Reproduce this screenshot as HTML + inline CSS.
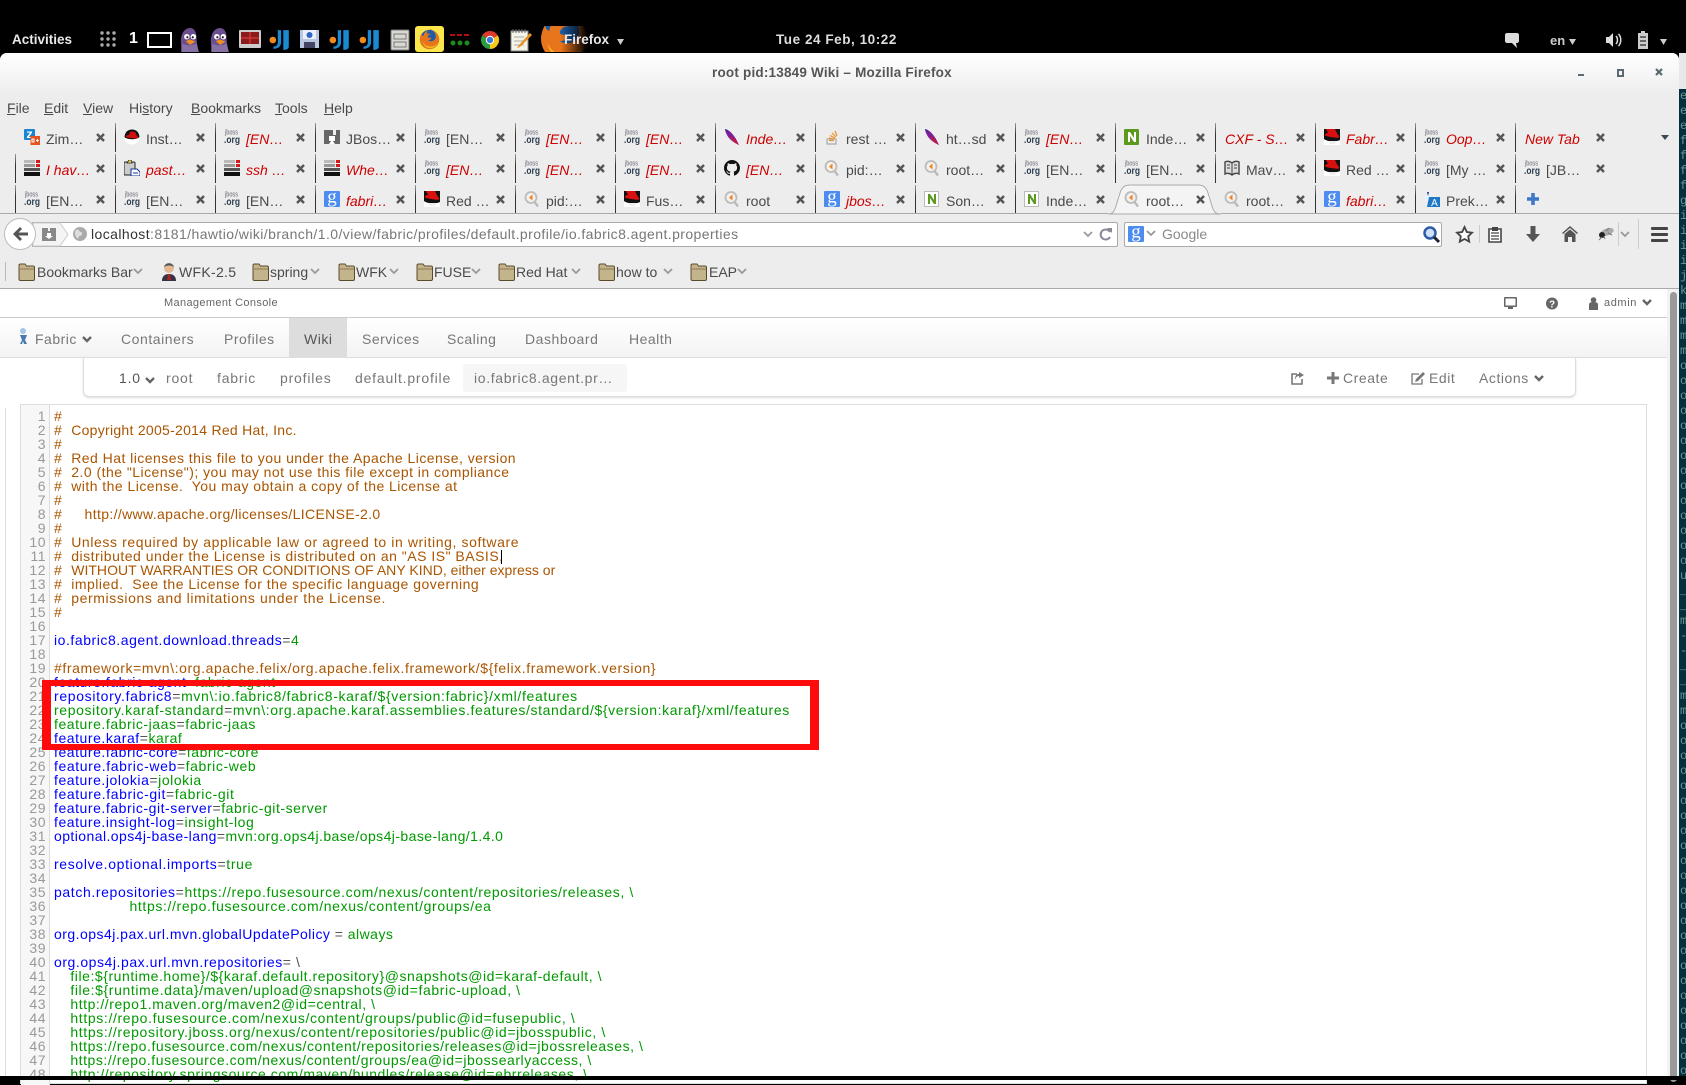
<!DOCTYPE html>
<html><head><meta charset="utf-8"><title>root pid:13849 Wiki – Mozilla Firefox</title>
<style>
html,body{margin:0;padding:0;background:#000}
body{position:relative;width:1686px;height:1080px;overflow:hidden;font-family:"Liberation Sans",sans-serif;font-size:14px;color:#4a4a4a}
.a{position:absolute;white-space:nowrap;line-height:16px}
svg{position:absolute;overflow:visible}
.s16{width:16px;height:16px}
#win{position:absolute;left:0;top:53px;width:1679px;height:1027px;border-radius:7px 7px 0 0;overflow:hidden;background:#ededed}
.t{position:absolute;width:100px;height:29px;line-height:30px;white-space:nowrap}
.t:before{content:"";position:absolute;left:-1px;top:0;width:1px;height:100%;background:linear-gradient(#999,#333 40%,#333)}
.t.n:before{display:none}
.t>svg.ic{left:8px;top:6px;width:16px;height:16px}
.t>svg.c{left:80px;top:10px;width:9px;height:9px}
.t>span{position:absolute;left:30px;top:1px}
.t>span.r,.r{color:#c00;font-style:italic}
.b{position:absolute;white-space:nowrap;line-height:16px;top:264px}
.nv{position:absolute;top:331px;line-height:16px;color:#777;letter-spacing:.5px;white-space:nowrap}
.bc{position:absolute;top:370px;line-height:16px;color:#777;letter-spacing:.8px;white-space:nowrap}
.bd{position:absolute;top:370px;line-height:16px;color:#777;letter-spacing:.55px;white-space:nowrap}
pre{margin:0;font-family:"Liberation Sans",sans-serif;font-size:14px;line-height:14px;letter-spacing:.55px}
.cm{color:#a50}.k{color:#00f}.v{color:#090}.o{color:#555}
.sp{letter-spacing:.2px}
</style></head><body>
<svg width="0" height="0" style="position:absolute">
<defs>
<symbol id="x" viewBox="0 0 9 9"><path d="M1 1l7 7M8 1L1 8" stroke="#555" stroke-width="2.4"/></symbol>
<symbol id="z" viewBox="0 0 16 16"><rect width="11" height="11" fill="#1a86cf" rx="1"/><path d="M3 2.500h5v1.200L4.800 8H8v1H3V7.800L6 3.600H3z" fill="#fff"/><rect x="6.500" y="7" width="9.500" height="9" fill="#e8521c"/><path d="M8 10h2v3H8zM12 11.500h3M13.500 10v3" stroke="#fff" stroke-width="1" fill="none"/></symbol>
<symbol id="rh" viewBox="0 0 16 16"><circle cx="8" cy="8" r="7.500" fill="#fff"/><path d="M.5 8C1 3 4 .5 8 .5s7 2.500 7.500 7.500C13 11 3 11 .5 8z" fill="#111"/><path d="M2 8c0-2 2-2 3-2l1-3c1-1 3 0 5 0 1 1 1 3 3 5 1 1-1 2-3 1.500C8 9 4 9 2 8z" fill="#d01010"/></symbol>
<symbol id="rs" viewBox="0 0 16 16"><rect width="16" height="16" fill="#fff"/><path d="M0 0h16v11c-4 2-12 2-16-1z" fill="#111"/><path d="M2 0h9c1 2 2 5 4 7 1 2-2 2-4 1.500C8 8 4 8 1 6.500 1 5 2 4 4 4z" fill="#d81010"/><path d="M5 12h7l-1 3H6z" fill="#eee"/></symbol>
<symbol id="j" viewBox="0 0 16 16"><text x="1" y="5.500" font-size="7" fill="#667" font-family="Liberation Sans" textLength="13" lengthAdjust="spacingAndGlyphs">jboss</text><text x="0" y="14" font-size="10.500" font-weight="bold" fill="#2c3e50" font-family="Liberation Sans" textLength="16" lengthAdjust="spacingAndGlyphs">.org</text></symbol>
<symbol id="bm" viewBox="0 0 16 16"><rect y="1" width="16" height="14" fill="#666"/><rect x="9" y="0" width="3" height="6" fill="#eee"/><path d="M5 15l3-4 3 4z" fill="#fff"/><rect x="5" y="7" width="6" height="5" fill="#fff"/></symbol>
<symbol id="f" viewBox="0 0 16 16"><path d="M1 0c5 1 10 7 13 14l1 2C10 14 5 10 3 6 2 4 1 2 1 0z" fill="#7a1e9c"/><path d="M6 7c3 1 6 4 9 9-4-2-7-4-9-9z" fill="#c8183c"/><path d="M1 0c1 0 3 1 4 3-1 0-3-1-4-3z" fill="#3a2a8c"/></symbol>
<symbol id="so" viewBox="0 0 16 16"><path d="M3 10h9v5H3z" fill="none" stroke="#aaa" stroke-width="1.200"/><path d="M5 11.500h5M5 9l5 1M6 6.500l5 2.500M8 4l4 4M11 2l2 5" stroke="#e8912c" stroke-width="1.200" fill="none"/></symbol>
<symbol id="n" viewBox="0 0 16 16"><rect width="15" height="16" fill="#5c9a1e" rx="1"/><path d="M4 13V3h2l4 6V3h2v10h-2L6 7v6z" fill="#fff"/></symbol>
<symbol id="nl" viewBox="0 0 16 16"><rect x=".5" y=".5" width="14" height="15" fill="#fff" stroke="#bbb"/><path d="M4 13V3h2l4 6V3h2v10h-2L6 7v6z" fill="#5c9a1e"/></symbol>
<symbol id="gh" viewBox="0 0 16 16"><path fill="#111" d="M8 0C3.580 0 0 3.580 0 8c0 3.540 2.290 6.530 5.470 7.590.4.070.55-.170.55-.380 0-.190-.010-.820-.010-1.490-2.010.370-2.530-.490-2.690-.940-.090-.230-.480-.940-.820-1.130-.280-.150-.680-.520-.010-.530.630-.010 1.080.580 1.230.820.720 1.210 1.870.870 2.330.660.070-.520.280-.870.510-1.070-1.780-.200-3.640-.890-3.640-3.950 0-.870.310-1.590.820-2.150-.080-.200-.360-1.020.080-2.120 0 0 .670-.210 2.200.820.640-.180 1.320-.270 2-.270.680 0 1.360.090 2 .27 1.530-1.040 2.200-.820 2.200-.820.440 1.100.160 1.920.080 2.120.510.560.820 1.270.820 2.150 0 3.070-1.870 3.750-3.650 3.950.290.250.540.730.540 1.480 0 1.070-.010 1.930-.010 2.200 0 .210.150.460.550.380A8.013 8.013 0 0016 8c0-4.420-3.580-8-8-8z"/></symbol>
<symbol id="h" viewBox="0 0 16 16"><circle cx="7" cy="6.500" r="5.500" fill="#f4f0ea" stroke="#bbb" stroke-width="1.800"/><path d="M10.500 11l3.500 4.500" stroke="#bbb" stroke-width="2.400"/><path d="M8.500 3.500v6L5 6.500z" fill="#e8842c"/></symbol>
<symbol id="bars" viewBox="0 0 16 16"><path d="M0 0h11v3H0z" fill="#bbb"/><path d="M12 0h4v3h-4zM12 4h4v3h-4z" fill="#d01c1c"/><path d="M0 4h11v3H0z" fill="#999"/><path d="M0 8h16v3H0z" fill="#555"/><path d="M0 12h16v4H0z" fill="#111"/></symbol>
<symbol id="ps" viewBox="0 0 16 16"><rect x="0" y="2" width="11" height="13" fill="#ccc" stroke="#222" rx="1"/><path d="M3 3l2-3 2 0 1 3z" fill="#f4e44c" stroke="#222" stroke-width=".8"/><path d="M7 9h6l3 3v4H7z" fill="#fff" stroke="#113399"/><path d="M9 13h5" stroke="#113399"/></symbol>
<symbol id="bk" viewBox="0 0 16 16"><path d="M1 2c2-1 5-1 7 1 2-2 5-2 7-1v12c-2-1-5-1-7 1-2-2-5-2-7-1z" fill="#ddd" stroke="#444" stroke-width="1.400"/><path d="M8 3v12M3 5h3M3 8h3M10 5h3M10 8h3" stroke="#444"/></symbol>
<symbol id="g" viewBox="0 0 16 16"><rect width="16" height="16" fill="#4c8cf0" rx="1"/><text x="8" y="11.500" font-size="19" fill="#fff" text-anchor="middle" font-family="Liberation Serif">g</text></symbol>
<symbol id="tr" viewBox="0 0 16 16"><path d="M1 0l6 0 1 9-7 1z" fill="#e8f0ff"/><path d="M3 1l2 0-1 4z" fill="#335"/><path d="M5 6h11v10H3z" fill="#1c78c8"/><text x="10.500" y="15" font-size="10" fill="#fff" text-anchor="middle" font-family="Liberation Sans">A</text></symbol>
<symbol id="fd" viewBox="0 0 17 18"><path d="M1 4V2.500C1 1.500 1.500 1 2.500 1H7l1.500 2H15c1 0 1.500.5 1.500 1.500V16c0 1-.5 1.500-1.500 1.500H2.500c-1 0-1.500-.5-1.500-1.500z" fill="#c4b48c" stroke="#5b4a2a"/><path d="M2 6h14" stroke="#8d7b50"/></symbol>
<symbol id="cv" viewBox="0 0 10 7"><path d="M1 1l4 4 4-4" fill="none" stroke="#999" stroke-width="1.800"/></symbol>
<symbol id="cd" viewBox="0 0 10 7"><path d="M1 1l4 4 4-4" fill="none" stroke="#666" stroke-width="2.400"/></symbol>
<symbol id="pd" viewBox="0 0 20 22"><path d="M3 22c0-6-1-10 0-14C4 3 7 0 11 0c4 0 6 4 6 9 0 5 1 9 2 13z" fill="#6b4e8e"/><path d="M3 22c0-4 1-6 1-8 2 2 8 3 13 0l2 8z" fill="#8770a4"/><circle cx="8" cy="8" r="2.500" fill="#fff"/><circle cx="14" cy="8" r="2.500" fill="#fff"/><circle cx="8.500" cy="8.500" r="1" fill="#222"/><circle cx="13.500" cy="8.500" r="1" fill="#222"/><path d="M7 12l4-1.500 5 2-5 3z" fill="#f09020"/></symbol>
<symbol id="jj" viewBox="0 0 20 20"><circle cx="3.500" cy="10" r="3" fill="#f08a1c"/><path d="M8 1h3v11c0 4-3 6-7 6v-2c3 0 4-2 4-4zM13 1h5v15c0 2-2 3-5 3z" fill="#1c8ad0"/></symbol>
<symbol id="fx" viewBox="0 0 24 24"><circle cx="12" cy="12" r="11" fill="#1c5da8"/><path d="M12 1C18 1 23 6 23 12s-5 11-11 11C6 23 1 18 1 12c0-3 1-5 2-7 0 2 1 3 2 3 0-2 2-5 5-6-1 2-1 3 0 4 1-1 2-1 4 0-3 0-4 2-4 3s2 1 4 1c0 2-2 3-4 3 3 2 8 1 9-3 1-4-2-8-6-10z" fill="#e8741c"/><path d="M4 14c1 5 5 8 9 8s7-3 8-6c-2 3-5 4-8 4-4 0-7-2-9-6z" fill="#f8b81c"/></symbol>
</defs>
</svg>

<!-- GNOME top bar -->
<div class="a" style="left:12px;top:32px;color:#e8e8e8;font-weight:bold;font-size:13.500px">Activities</div>
<svg style="left:100px;top:31px" width="16" height="16"><g fill="#aaa"><circle cx="2" cy="2" r="1.700"/><circle cx="8" cy="2" r="1.700"/><circle cx="14" cy="2" r="1.700"/><circle cx="2" cy="8" r="1.700"/><circle cx="8" cy="8" r="1.700"/><circle cx="14" cy="8" r="1.700"/><circle cx="2" cy="14" r="1.700"/><circle cx="8" cy="14" r="1.700"/><circle cx="14" cy="14" r="1.700"/></g></svg>
<div class="a" style="left:129px;top:31px;color:#fff;font-weight:bold;font-size:16px">1</div>
<div style="position:absolute;left:147px;top:32px;width:21px;height:12px;border:2px solid #fff;border-top-width:2px"></div>
<svg style="left:178px;top:28px" width="22" height="24"><use href="#pd"/></svg>
<svg style="left:208px;top:28px" width="22" height="24"><use href="#pd"/></svg>
<svg style="left:239px;top:30px" width="22" height="18"><rect width="22" height="18" fill="#ccc" rx="1"/><rect x="2" y="2" width="18" height="12" fill="#8c1c1c"/><path d="M11 2v12M2 8h18" stroke="#e84040"/></svg>
<svg style="left:269px;top:29px" width="22" height="22"><use href="#jj"/></svg>
<svg style="left:300px;top:30px" width="19" height="18"><rect width="19" height="18" fill="#b8c8e0"/><rect x="3" y="0" width="13" height="9" fill="#eef"/><circle cx="9.500" cy="5" r="3" fill="#2c68c0"/><rect x="4" y="12" width="11" height="6" fill="#446"/></svg>
<svg style="left:329px;top:29px" width="22" height="22"><use href="#jj"/></svg>
<svg style="left:359px;top:29px" width="22" height="22"><use href="#jj"/></svg>
<svg style="left:391px;top:30px" width="18" height="20"><rect width="18" height="20" fill="#d8d8d0" stroke="#777" rx="1"/><rect x="3" y="4" width="12" height="5" fill="none" stroke="#777"/><rect x="3" y="12" width="12" height="5" fill="none" stroke="#777"/></svg>
<div style="position:absolute;left:415px;top:26px;width:29px;height:26px;background:#fbe64c;border-radius:3px"></div>
<svg style="left:419px;top:29px" width="21" height="21"><use href="#fx"/></svg>
<svg style="left:450px;top:34px" width="20" height="13"><path d="M0 0h5v2H0zM7 0h5v2H7zM14 0h5v2h-5z" fill="#b01010"/><g fill="#1c8a1c"><circle cx="3" cy="9" r="2.500"/><circle cx="10" cy="9" r="2.500"/><circle cx="17" cy="9" r="2.500"/></g></svg>
<svg style="left:481px;top:31px" width="18" height="18" viewBox="0 0 18 18"><path d="M9 9L1.200 4.500A9 9 0 0116.800 4.500z" fill="#db3a2c"/><path d="M9 9l7.800-4.500A9 9 0 019 18z" fill="#f6c81c"/><path d="M9 9v9A9 9 0 011.200 4.500z" fill="#2c9c44"/><circle cx="9" cy="9" r="4.200" fill="#fff"/><circle cx="9" cy="9" r="3.200" fill="#3c78d8"/></svg>
<svg style="left:510px;top:28px" width="22" height="23"><rect x="1" y="3" width="17" height="20" fill="#f4f4e8" stroke="#888"/><path d="M3 1v4M6 1v4M9 1v4M12 1v4M15 1v4" stroke="#666"/><path d="M4 9h10M4 13h10M4 17h10" stroke="#aaa"/><path d="M20 5L9 17l-2 3 3-1L22 7z" fill="#e89020"/></svg>
<div style="position:absolute;left:541px;top:26px;width:50px;height:26px;overflow:hidden"><svg style="left:-2px;top:-12px" width="50" height="50"><use href="#fx"/></svg><div style="position:absolute;left:0;top:0;width:50px;height:26px;background:linear-gradient(90deg,rgba(0,0,0,0) 40%,#000 92%)"></div></div>
<div class="a" style="left:564px;top:32px;color:#e8e8e8;font-weight:bold;font-size:13.500px">Firefox</div>
<svg style="left:617px;top:39px" width="7" height="6"><path d="M0 0h7L3.500 6z" fill="#ccc"/></svg>
<div class="a" style="left:776px;top:32px;color:#ddd;font-weight:bold;font-size:13.500px;letter-spacing:.55px">Tue 24 Feb, 10:22</div>
<svg style="left:1505px;top:33px" width="14" height="15"><path d="M2 0h10c1 0 2 1 2 2v6c0 1-1 2-2 2h-1l1 5-5-5H2C1 10 0 9 0 8V2C0 1 1 0 2 0z" fill="#ddd"/></svg>
<div class="a" style="left:1550px;top:33px;color:#ccc;font-weight:bold;font-size:13px">en</div>
<svg style="left:1569px;top:39px" width="7" height="6"><path d="M0 0h7L3.500 6z" fill="#ccc"/></svg>
<svg style="left:1606px;top:32px" width="16" height="16"><path d="M0 5h3l4-4v14l-4-4H0z" fill="#ddd"/><path d="M10 4c2 2 2 6 0 8M12.500 2c3 3 3 9 0 12" stroke="#ddd" stroke-width="1.500" fill="none"/></svg>
<svg style="left:1637px;top:31px" width="12" height="18"><path d="M4 0h4v2h3v16H1V2h3z" fill="#ccc"/><path d="M3 6h6M3 10h6M3 14h6" stroke="#000"/></svg>
<svg style="left:1660px;top:39px" width="7" height="6"><path d="M0 0h7L3.500 6z" fill="#ccc"/></svg>

<!-- terminal strip at right edge -->
<div style="position:absolute;left:1679px;top:53px;width:7px;height:1027px;background:#03303c;overflow:hidden">
<div style="position:absolute;left:0;top:0;width:7px;height:36px;background:#e8e8e8"></div>
<pre style="position:absolute;left:1px;top:36px;font-family:'Liberation Mono',monospace;font-size:12px;line-height:15px;letter-spacing:0;color:#6d929a">e
e
e
f
f
f
f
g
i
i
i
i
j
k
m
m
m
m
o
o
o
o
o
o
o
o
o
o
o
o
o
o
u
_
_
m
-
-
_
_
m
m
o
o
o
o
o
o
o
o
o
o
o
o
o
o
o
o
o
o
o
o
o
o
o
o</pre></div>

<!-- Firefox window -->
<div id="win">
<div style="position:absolute;left:0;top:0;width:1679px;height:42px;background:linear-gradient(#fff,#ededed)"></div>
</div>
<div class="a" style="left:712px;top:65px;color:#555;font-weight:bold;font-size:13.500px;letter-spacing:.2px">root pid:13849 Wiki – Mozilla Firefox</div>
<div style="position:absolute;left:1578px;top:74px;width:6px;height:2px;background:#5a6a70"></div>
<div style="position:absolute;left:1617px;top:69px;width:3px;height:4px;border:2px solid #5a6a70"></div>
<svg style="left:1655px;top:68px" width="8" height="8"><path d="M1 1l6 6M7 1L1 7" stroke="#5a6a70" stroke-width="2.200"/></svg>

<!-- Menu -->
<div class="a" style="left:7px;top:100px"><u>F</u>ile</div>
<div class="a" style="left:44px;top:100px"><u>E</u>dit</div>
<div class="a" style="left:83px;top:100px"><u>V</u>iew</div>
<div class="a" style="left:129px;top:100px">Hi<u>s</u>tory</div>
<div class="a" style="left:191px;top:100px"><u>B</u>ookmarks</div>
<div class="a" style="left:275px;top:100px"><u>T</u>ools</div>
<div class="a" style="left:324px;top:100px"><u>H</u>elp</div>

<!-- Tabs row 1 -->
<div class="t n" style="left:16px;top:123px"><svg class="ic"><use href="#z"/></svg><span>Zim…</span><svg class="c"><use href="#x"/></svg></div>
<div class="t" style="left:116px;top:123px"><svg class="ic"><use href="#rh"/></svg><span>Inst…</span><svg class="c"><use href="#x"/></svg></div>
<div class="t" style="left:216px;top:123px"><svg class="ic"><use href="#j"/></svg><span class="r">[EN…</span><svg class="c"><use href="#x"/></svg></div>
<div class="t" style="left:316px;top:123px"><svg class="ic"><use href="#bm"/></svg><span>JBos…</span><svg class="c"><use href="#x"/></svg></div>
<div class="t" style="left:416px;top:123px"><svg class="ic"><use href="#j"/></svg><span>[EN…</span><svg class="c"><use href="#x"/></svg></div>
<div class="t" style="left:516px;top:123px"><svg class="ic"><use href="#j"/></svg><span class="r">[EN…</span><svg class="c"><use href="#x"/></svg></div>
<div class="t" style="left:616px;top:123px"><svg class="ic"><use href="#j"/></svg><span class="r">[EN…</span><svg class="c"><use href="#x"/></svg></div>
<div class="t" style="left:716px;top:123px"><svg class="ic"><use href="#f"/></svg><span class="r">Inde…</span><svg class="c"><use href="#x"/></svg></div>
<div class="t" style="left:816px;top:123px"><svg class="ic"><use href="#so"/></svg><span>rest …</span><svg class="c"><use href="#x"/></svg></div>
<div class="t" style="left:916px;top:123px"><svg class="ic"><use href="#f"/></svg><span>ht…sd</span><svg class="c"><use href="#x"/></svg></div>
<div class="t" style="left:1016px;top:123px"><svg class="ic"><use href="#j"/></svg><span class="r">[EN…</span><svg class="c"><use href="#x"/></svg></div>
<div class="t" style="left:1116px;top:123px"><svg class="ic"><use href="#n"/></svg><span>Inde…</span><svg class="c"><use href="#x"/></svg></div>
<div class="t" style="left:1216px;top:123px"><span class="r" style="left:9px">CXF - S…</span><svg class="c"><use href="#x"/></svg></div>
<div class="t" style="left:1316px;top:123px"><svg class="ic"><use href="#rs"/></svg><span class="r">Fabr…</span><svg class="c"><use href="#x"/></svg></div>
<div class="t" style="left:1416px;top:123px"><svg class="ic"><use href="#j"/></svg><span class="r">Oop…</span><svg class="c"><use href="#x"/></svg></div>
<div class="t" style="left:1516px;top:123px"><span class="r" style="left:9px">New Tab</span><svg class="c"><use href="#x"/></svg></div>
<svg style="left:1661px;top:135px" width="8" height="5"><path d="M0 0h8L4 5z" fill="#3a4a55"/></svg>

<!-- Tabs row 2 -->
<div class="t" style="left:16px;top:154px"><svg class="ic"><use href="#bars"/></svg><span class="r">I hav…</span><svg class="c"><use href="#x"/></svg></div>
<div class="t" style="left:116px;top:154px"><svg class="ic"><use href="#ps"/></svg><span class="r">past…</span><svg class="c"><use href="#x"/></svg></div>
<div class="t" style="left:216px;top:154px"><svg class="ic"><use href="#bars"/></svg><span class="r">ssh …</span><svg class="c"><use href="#x"/></svg></div>
<div class="t" style="left:316px;top:154px"><svg class="ic"><use href="#bars"/></svg><span class="r">Whe…</span><svg class="c"><use href="#x"/></svg></div>
<div class="t" style="left:416px;top:154px"><svg class="ic"><use href="#j"/></svg><span class="r">[EN…</span><svg class="c"><use href="#x"/></svg></div>
<div class="t" style="left:516px;top:154px"><svg class="ic"><use href="#j"/></svg><span class="r">[EN…</span><svg class="c"><use href="#x"/></svg></div>
<div class="t" style="left:616px;top:154px"><svg class="ic"><use href="#j"/></svg><span class="r">[EN…</span><svg class="c"><use href="#x"/></svg></div>
<div class="t" style="left:716px;top:154px"><svg class="ic"><use href="#gh"/></svg><span class="r">[EN…</span><svg class="c"><use href="#x"/></svg></div>
<div class="t" style="left:816px;top:154px"><svg class="ic"><use href="#h"/></svg><span>pid:…</span><svg class="c"><use href="#x"/></svg></div>
<div class="t" style="left:916px;top:154px"><svg class="ic"><use href="#h"/></svg><span>root…</span><svg class="c"><use href="#x"/></svg></div>
<div class="t" style="left:1016px;top:154px"><svg class="ic"><use href="#j"/></svg><span>[EN…</span><svg class="c"><use href="#x"/></svg></div>
<div class="t" style="left:1116px;top:154px"><svg class="ic"><use href="#j"/></svg><span>[EN…</span><svg class="c"><use href="#x"/></svg></div>
<div class="t" style="left:1216px;top:154px"><svg class="ic"><use href="#bk"/></svg><span>Mav…</span><svg class="c"><use href="#x"/></svg></div>
<div class="t" style="left:1316px;top:154px"><svg class="ic"><use href="#rs"/></svg><span>Red …</span><svg class="c"><use href="#x"/></svg></div>
<div class="t" style="left:1416px;top:154px"><svg class="ic"><use href="#j"/></svg><span>[My …</span><svg class="c"><use href="#x"/></svg></div>
<div class="t" style="left:1516px;top:154px"><svg class="ic"><use href="#j"/></svg><span>[JB…</span><svg class="c"><use href="#x"/></svg></div>

<!-- Tabs row 3 -->
<div class="t" style="left:16px;top:185px"><svg class="ic"><use href="#j"/></svg><span>[EN…</span><svg class="c"><use href="#x"/></svg></div>
<div class="t" style="left:116px;top:185px"><svg class="ic"><use href="#j"/></svg><span>[EN…</span><svg class="c"><use href="#x"/></svg></div>
<div class="t" style="left:216px;top:185px"><svg class="ic"><use href="#j"/></svg><span>[EN…</span><svg class="c"><use href="#x"/></svg></div>
<div class="t" style="left:316px;top:185px"><svg class="ic"><use href="#g"/></svg><span class="r">fabri…</span><svg class="c"><use href="#x"/></svg></div>
<div class="t" style="left:416px;top:185px"><svg class="ic"><use href="#rs"/></svg><span>Red …</span><svg class="c"><use href="#x"/></svg></div>
<div class="t" style="left:516px;top:185px"><svg class="ic"><use href="#h"/></svg><span>pid:…</span><svg class="c"><use href="#x"/></svg></div>
<div class="t" style="left:616px;top:185px"><svg class="ic"><use href="#rs"/></svg><span>Fus…</span><svg class="c"><use href="#x"/></svg></div>
<div class="t" style="left:716px;top:185px"><svg class="ic"><use href="#h"/></svg><span>root</span><svg class="c"><use href="#x"/></svg></div>
<div class="t" style="left:816px;top:185px"><svg class="ic"><use href="#g"/></svg><span class="r">jbos…</span><svg class="c"><use href="#x"/></svg></div>
<div class="t" style="left:916px;top:185px"><svg class="ic"><use href="#nl"/></svg><span>Son…</span><svg class="c"><use href="#x"/></svg></div>
<div class="t" style="left:1016px;top:185px"><svg class="ic"><use href="#nl"/></svg><span>Inde…</span><svg class="c"><use href="#x"/></svg></div>
<svg style="left:1108px;top:185px" width="118" height="30"><path d="M0 29c5 0 6-2 8-8l4-13C14 2 17 0 22 0h68c5 0 8 2 10 8l4 13c2 6 3 8 9 8z" fill="#f4f4f4" stroke="#aaa"/></svg>
<div class="t n" style="left:1116px;top:185px"><svg class="ic"><use href="#h"/></svg><span>root…</span><svg class="c"><use href="#x"/></svg></div>
<div class="t n" style="left:1216px;top:185px"><svg class="ic"><use href="#h"/></svg><span>root…</span><svg class="c"><use href="#x"/></svg></div>
<div class="t" style="left:1316px;top:185px"><svg class="ic"><use href="#g"/></svg><span class="r">fabri…</span><svg class="c"><use href="#x"/></svg></div>
<div class="t" style="left:1416px;top:185px"><svg class="ic"><use href="#tr"/></svg><span>Prek…</span><svg class="c"><use href="#x"/></svg></div>
<div class="t" style="left:1516px;top:185px"><svg style="left:10px;top:7px" width="14" height="14"><path d="M7 1v12M1 7h12" stroke="#3c78c8" stroke-width="3.500"/></svg></div>
<div style="position:absolute;left:0;top:213px;width:1108px;height:1px;background:#aaa"></div>
<div style="position:absolute;left:1221px;top:213px;width:458px;height:1px;background:#aaa"></div>

<!-- Nav bar -->
<div style="position:absolute;left:32px;top:222px;width:1084px;height:23px;background:#fff;border:1px solid #aaa;border-radius:0 2px 2px 0"></div>
<svg style="left:33px;top:223px" width="36" height="23"><path d="M0 0h27l8 11.500L27 23H0z" fill="#f4f4f4" stroke="#ccc"/></svg>
<div style="position:absolute;left:4px;top:218px;width:30px;height:30px;border-radius:50%;background:#fff;border:1px solid #bbb"></div>
<svg style="left:12px;top:226px" width="17" height="16"><path d="M8 1L1 8l7 7 2-2-3.500-3.500H16v-3H6.500L10 3z" fill="#555"/></svg>
<svg style="left:42px;top:227px" width="14" height="14"><path d="M0 1h6v3h2V1h6v13H0z" fill="#888"/><path d="M5 6h4v3h2l-4 3-4-3h2z" fill="#fff"/></svg>
<svg style="left:73px;top:227px" width="14" height="14"><circle cx="7" cy="7" r="7" fill="#aaa"/><path d="M3 3c3-2 3 2 5 2s1 4-1 4-1 4-3 2-3-6-1-8z" fill="#ddd"/></svg>
<div class="a" style="left:91px;top:226px;color:#777;letter-spacing:.42px"><span style="color:#333">localhost</span>:8181/hawtio/wiki/branch/1.0/view/fabric/profiles/default.profile/io.fabric8.agent.properties</div>
<svg style="left:1083px;top:231px" width="10" height="7"><use href="#cv"/></svg>
<svg style="left:1099px;top:227px" width="13" height="14"><path d="M11 5a5 5 0 100 5" fill="none" stroke="#889" stroke-width="2"/><path d="M8 1h5v5z" fill="#889"/></svg>
<div style="position:absolute;left:1124px;top:222px;width:316px;height:23px;background:#fff;border:1px solid #aaa;border-radius:2px"></div>
<svg class="s16" style="left:1128px;top:226px"><use href="#g"/></svg>
<svg style="left:1146px;top:230px" width="10" height="7"><use href="#cv"/></svg>
<div class="a" style="left:1162px;top:226px;color:#888">Google</div>
<svg style="left:1423px;top:226px" width="17" height="17"><circle cx="7" cy="7" r="5.500" fill="#cfe0f8" stroke="#2c5ca8" stroke-width="2.500"/><path d="M11 11l5 5" stroke="#223" stroke-width="3"/></svg>
<svg style="left:1456px;top:226px" width="17" height="17"><path d="M8.500 1l2.300 5 5.200.7-3.800 3.600 1 5.300-4.700-2.600-4.700 2.600 1-5.300L1 6.700 6.200 6z" fill="#fff" stroke="#444" stroke-width="1.800"/></svg>
<div style="position:absolute;left:1479px;top:225px;width:1px;height:18px;background:#ccc"></div>
<svg style="left:1488px;top:226px" width="14" height="16"><path d="M1 3h12v13H1z" fill="#fff" stroke="#444" stroke-width="1.600"/><path d="M4 1h6v4H4z" fill="#444"/><path d="M3 7h8M3 10h8M3 13h8" stroke="#444" stroke-width="1.300"/></svg>
<svg style="left:1526px;top:226px" width="14" height="16"><path d="M4.500 0h5v8H14l-7 8-7-8h4.500z" fill="#555"/></svg>
<svg style="left:1562px;top:226px" width="16" height="16"><path d="M8 0l8 7-1 1-7-6-7 6-1-1z" fill="#555"/><path d="M2.500 8L8 3.500 13.500 8v8H10v-5H6v5H2.500z" fill="#555"/></svg>
<svg style="left:1597px;top:226px" width="17" height="16"><ellipse cx="10" cy="6" rx="7" ry="3.500" fill="#aaa" transform="rotate(-20 10 6)"/><circle cx="5" cy="9" r="3" fill="#222"/><path d="M2 14l3-3M8 13l-1-3M12 2l-3 3M15 9l-4-2" stroke="#777"/></svg>
<div style="position:absolute;left:1618px;top:222px;width:1px;height:24px;background:#ccc"></div>
<svg style="left:1620px;top:231px" width="10" height="7"><use href="#cv"/></svg>
<div style="position:absolute;left:1638px;top:219px;width:1px;height:30px;background:#ccd"></div>
<div style="position:absolute;left:1651px;top:227px;width:17px;height:3px;background:#444;border-radius:1px"></div>
<div style="position:absolute;left:1651px;top:233px;width:17px;height:3px;background:#444;border-radius:1px"></div>
<div style="position:absolute;left:1651px;top:239px;width:17px;height:3px;background:#444;border-radius:1px"></div>

<!-- Bookmarks -->
<div style="position:absolute;left:5px;top:262px;width:1px;height:19px;background:#bbb"></div>
<svg style="left:18px;top:263px" width="17" height="18"><use href="#fd"/></svg><div class="b" style="left:37px">Bookmarks Bar</div><svg style="left:133px;top:268px" width="10" height="7"><use href="#cv"/></svg>
<svg style="left:161px;top:262px" width="16" height="19"><circle cx="8" cy="6" r="5" fill="#e4b894"/><path d="M3 5c1-5 9-5 10 0-3-2-7-2-10 0z" fill="#555"/><path d="M1 19c0-5 3-7 7-7s7 2 7 7z" fill="#334"/><path d="M7 12h2l1 6H6z" fill="#b02020"/></svg>
<div class="b" style="left:179px;letter-spacing:.3px">WFK-2.5</div>
<svg style="left:252px;top:263px" width="17" height="18"><use href="#fd"/></svg><div class="b" style="left:270px">spring</div><svg style="left:310px;top:268px" width="10" height="7"><use href="#cv"/></svg>
<svg style="left:338px;top:263px" width="17" height="18"><use href="#fd"/></svg><div class="b" style="left:356px">WFK</div><svg style="left:389px;top:268px" width="10" height="7"><use href="#cv"/></svg>
<svg style="left:416px;top:263px" width="17" height="18"><use href="#fd"/></svg><div class="b" style="left:434px">FUSE</div><svg style="left:471px;top:268px" width="10" height="7"><use href="#cv"/></svg>
<svg style="left:498px;top:263px" width="17" height="18"><use href="#fd"/></svg><div class="b" style="left:516px">Red Hat</div><svg style="left:571px;top:268px" width="10" height="7"><use href="#cv"/></svg>
<svg style="left:598px;top:263px" width="17" height="18"><use href="#fd"/></svg><div class="b" style="left:616px">how to</div><svg style="left:663px;top:268px" width="10" height="7"><use href="#cv"/></svg>
<svg style="left:690px;top:263px" width="17" height="18"><use href="#fd"/></svg><div class="b" style="left:709px">EAP</div><svg style="left:737px;top:268px" width="10" height="7"><use href="#cv"/></svg>
<div style="position:absolute;left:0;top:288px;width:1679px;height:1px;background:#aaa"></div>

<!-- Page -->
<div style="position:absolute;left:0;top:289px;width:1679px;height:791px;background:#fff"></div>
<div class="a" style="left:164px;top:295px;font-size:11px;color:#666;letter-spacing:.35px">Management Console</div>
<svg style="left:1504px;top:297px" width="13" height="13"><rect x="0" y="0" width="13" height="10" fill="#666" rx="1"/><rect x="1.500" y="1.500" width="10" height="7" fill="#fff"/><rect x="4" y="10" width="5" height="2" fill="#666"/></svg>
<svg style="left:1546px;top:297px" width="12" height="13"><circle cx="6" cy="6.500" r="6" fill="#666"/><text x="6" y="10.500" font-size="10" font-weight="bold" fill="#fff" text-anchor="middle" font-family="Liberation Sans">?</text></svg>
<svg style="left:1589px;top:297px" width="9" height="13"><circle cx="4.500" cy="3" r="2.800" fill="#666"/><path d="M0 13V8c0-2 1-3 4.500-3S9 6 9 8v5z" fill="#666"/></svg>
<div class="a" style="left:1604px;top:295px;font-size:11px;color:#666;letter-spacing:.6px">admin</div>
<svg style="left:1642px;top:299px" width="10" height="7"><use href="#cd"/></svg>

<div style="position:absolute;left:0;top:317px;width:1667px;height:41px;background:linear-gradient(#fff,#f3f3f3);border-top:1px solid #ccc;border-bottom:1px solid #ddd;box-sizing:border-box"></div>
<div style="position:absolute;left:289px;top:318px;width:58px;height:39px;background:#ddd"></div>
<svg style="left:17px;top:328px" width="13" height="17"><circle cx="6" cy="3" r="3" fill="#a8c4e8"/><path d="M3 7h7l-2 5 2 4H7L6 13l-1 3H3l2-4z" fill="#4a78b0"/></svg>
<div class="nv" style="left:35px">Fabric</div><svg style="left:82px;top:336px" width="10" height="7"><use href="#cd"/></svg>
<div class="nv" style="left:121px;letter-spacing:.55px">Containers</div>
<div class="nv" style="left:224px">Profiles</div>
<div class="nv" style="left:304px;color:#555">Wiki</div>
<div class="nv" style="left:362px">Services</div>
<div class="nv" style="left:447px">Scaling</div>
<div class="nv" style="left:525px;letter-spacing:.55px">Dashboard</div>
<div class="nv" style="left:629px">Health</div>

<div style="position:absolute;left:83px;top:358px;width:1491px;height:38px;background:#fff;border:1px solid #ddd;border-top:none;border-radius:0 0 6px 6px;box-shadow:0 1px 2px #ddd"></div>
<div style="position:absolute;left:463px;top:364px;width:164px;height:28px;background:#f6f6f6;border-radius:3px"></div>
<div class="bc" style="left:119px;color:#555">1.0</div><svg style="left:145px;top:377px" width="10" height="7"><use href="#cd"/></svg>
<div class="bc" style="left:166px">root</div>
<div class="bc" style="left:217px">fabric</div>
<div class="bc" style="left:280px">profiles</div>
<div class="bc" style="left:355px">default.profile</div>
<div class="bd" style="left:474px;letter-spacing:.65px">io.fabric8.agent.pr…</div>
<svg style="left:1291px;top:371px" width="14" height="14"><path d="M11 8v5H1V3h5" fill="none" stroke="#777" stroke-width="1.600"/><path d="M8 1l5 3-5 3V5C6 5 5 6 4 9c0-4 1-6 4-6z" fill="#777"/></svg>
<svg style="left:1327px;top:372px" width="12" height="12"><path d="M6 0v12M0 6h12" stroke="#777" stroke-width="3"/></svg>
<div class="bd" style="left:1343px">Create</div>
<svg style="left:1411px;top:371px" width="14" height="14"><path d="M11 8v5H1V3h7" fill="none" stroke="#777" stroke-width="1.300"/><path d="M12 1l2 2-7 7-3 1 1-3z" fill="#777"/></svg>
<div class="bd" style="left:1429px">Edit</div>
<div class="bd" style="left:1479px">Actions</div><svg style="left:1534px;top:375px" width="10" height="7"><use href="#cd"/></svg>

<!-- Editor -->
<div style="position:absolute;left:5px;top:408px;width:1px;height:672px;background:#ddd"></div>
<div style="position:absolute;left:20px;top:404px;width:1627px;height:680px;border:1px solid #ddd;box-sizing:border-box;background:#fff"></div>
<div style="position:absolute;left:21px;top:405px;width:28px;height:680px;background:#f7f7f7;border-right:1px solid #ddd"></div>
<pre style="position:absolute;left:21px;top:409px;width:25px;text-align:right;color:#999;letter-spacing:.5px">1
2
3
4
5
6
7
8
9
10
11
12
13
14
15
16
17
18
19
20
21
22
23
24
25
26
27
28
29
30
31
32
33
34
35
36
37
38
39
40
41
42
43
44
45
46
47
48</pre>
<pre style="position:absolute;left:54px;top:409px"><span class="cm">#
#  <span style="letter-spacing:.28px">Copyright 2005-2014 Red Hat, Inc.</span>
#
#  <span style="letter-spacing:.46px">Red Hat licenses this file to you under the Apache License, version</span>
#  <span style="letter-spacing:.47px">2.0 (the "License"); you may not use this file except in compliance</span>
#  <span style="letter-spacing:.46px">with the License.  You may obtain a copy of the License at</span>
#
#     <span style="letter-spacing:.36px">http://www.apache.org/licenses/LICENSE-2.0</span>
#
#  <span style="letter-spacing:.6px">Unless required by applicable law or agreed to in writing, software</span>
#  <span style="letter-spacing:.5px">distributed under the License is distributed on an "AS IS" BASIS,</span>
#  <span style="letter-spacing:.02px">WITHOUT WARRANTIES OR CONDITIONS OF ANY KIND, either express or</span>
#  <span style="letter-spacing:.5px">implied.  See the License for the specific language governing</span>
#  <span style="letter-spacing:.6px">permissions and limitations under the License.</span>
#</span>

<span class="k">io.fabric8.agent.download.threads</span><span class="o">=</span><span class="v">4</span>

<span class="cm" style="letter-spacing:.6px">#framework=mvn\:org.apache.felix/org.apache.felix.framework/${felix.framework.version}</span>
<span class="k">feature.fabric-agent</span><span class="o">=</span><span class="v">fabric-agent</span>
<span style="letter-spacing:.66px"><span class="k">repository.fabric8</span><span class="o">=</span><span class="v">mvn\:io.fabric8/fabric8-karaf/${version:fabric}/xml/features</span></span>
<span style="letter-spacing:.62px"><span class="v">repository.karaf-standard</span><span class="o">=</span><span class="v">mvn\:org.apache.karaf.assemblies.features/standard/${version:karaf}/xml/features</span></span>
<span class="v">feature.fabric-jaas</span><span class="o">=</span><span class="v">fabric-jaas</span>
<span class="k">feature.karaf</span><span class="o">=</span><span class="v">karaf</span>
<span class="k">feature.fabric-core</span><span class="o">=</span><span class="v">fabric-core</span>
<span style="letter-spacing:.6px"><span class="k">feature.fabric-web</span><span class="o">=</span><span class="v">fabric-web</span></span>
<span class="k">feature.jolokia</span><span class="o">=</span><span class="v">jolokia</span>
<span style="letter-spacing:.6px"><span class="k">feature.fabric-git</span><span class="o">=</span><span class="v">fabric-git</span></span>
<span class="k">feature.fabric-git-server</span><span class="o">=</span><span class="v">fabric-git-server</span>
<span class="k">feature.insight-log</span><span class="o">=</span><span class="v">insight-log</span>
<span style="letter-spacing:.43px"><span class="k">optional.ops4j-base-lang</span><span class="o">=</span><span class="v">mvn:org.ops4j.base/ops4j-base-lang/1.4.0</span></span>

<span style="letter-spacing:.65px"><span class="k">resolve.optional.imports</span><span class="o">=</span><span class="v">true</span></span>

<span style="letter-spacing:.62px"><span class="k">patch.repositories</span><span class="o">=</span><span class="v">https://repo.fusesource.com/nexus/content/repositories/releases, \</span></span>
<span class="v">                 <span style="letter-spacing:.63px">https://repo.fusesource.com/nexus/content/groups/ea</span></span>

<span style="letter-spacing:.47px"><span class="k">org.ops4j.pax.url.mvn.globalUpdatePolicy</span><span class="o"> = </span><span class="v">always</span></span>

<span class="k">org.ops4j.pax.url.mvn.repositories</span><span class="o">= \</span><span class="v">
<span class="sp">    </span>file:${runtime.home}/${karaf.default.repository}@snapshots@id=karaf-default, \
<span class="sp">    </span><span style="letter-spacing:.6px">file:${runtime.data}/maven/upload@snapshots@id=fabric-upload, \</span>
<span class="sp">    </span>http://repo1.maven.org/maven2@id=central, \
<span class="sp">    </span><span style="letter-spacing:.64px">https://repo.fusesource.com/nexus/content/groups/public@id=fusepublic, \</span>
<span class="sp">    </span><span style="letter-spacing:.63px">https://repository.jboss.org/nexus/content/repositories/public@id=jbosspublic, \</span>
<span class="sp">    </span><span style="letter-spacing:.55px">https://repo.fusesource.com/nexus/content/repositories/releases@id=jbossreleases, \</span>
<span class="sp">    </span><span style="letter-spacing:.54px">https://repo.fusesource.com/nexus/content/groups/ea@id=jbossearlyaccess, \</span>
<span class="sp">    </span>http://repository.springsource.com/maven/bundles/release@id=ebrreleases, \</span></pre>
<div style="position:absolute;left:501px;top:550px;width:1px;height:14px;background:#000"></div>

<!-- Red annotation -->
<div style="position:absolute;left:42px;top:680px;width:777px;height:70px;box-sizing:border-box;border:solid #fe0c0c;border-width:6px 9px 6px 9px"></div>

<!-- Scrollbar -->
<div style="position:absolute;left:1667px;top:289px;width:12px;height:791px;background:#f2f2f2"></div>
<div style="position:absolute;left:1670px;top:292px;width:7px;height:790px;background:#999;border-radius:4px"></div>

<!-- Bottom black edge -->
<div style="position:absolute;left:0;top:1076px;width:1686px;height:4px;background:#000"></div>
</body></html>
